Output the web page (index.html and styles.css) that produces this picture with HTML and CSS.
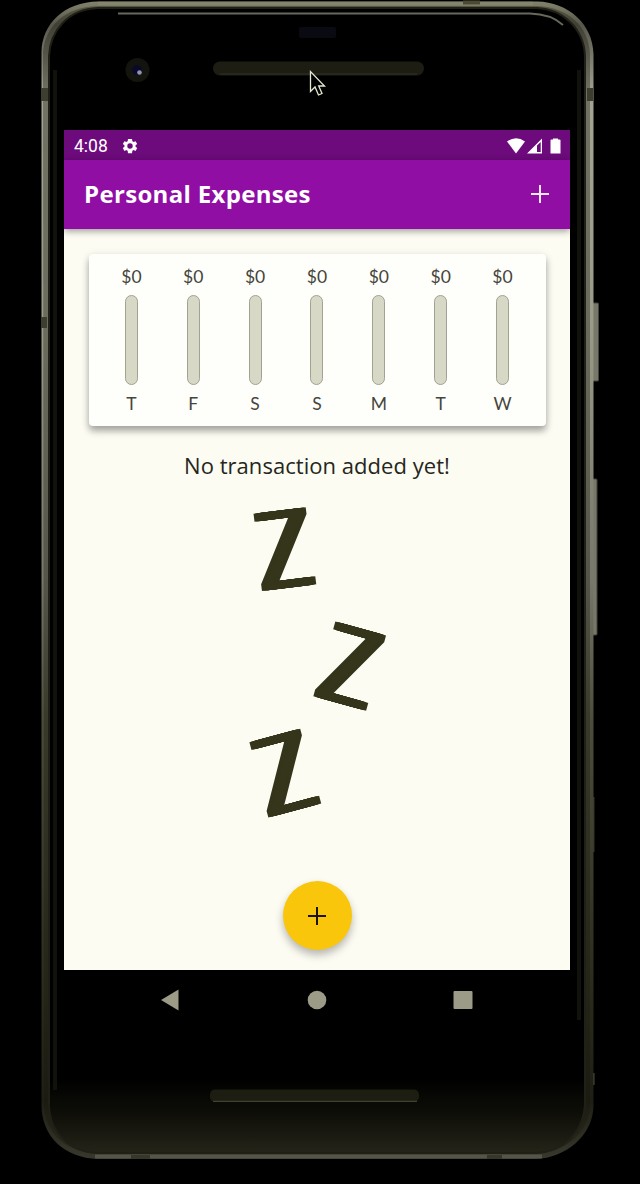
FILE: index.html
```html
<!DOCTYPE html>
<html lang="en">
<head>
<meta charset="utf-8">
<title>Personal Expenses</title>
<link rel="stylesheet" href="styles.css">
</head>
<body>
<div class="stage">
  <svg class="shell" width="640" height="1184" viewBox="0 0 640 1184">
    <defs>
      <linearGradient id="rail" x1="0" y1="0" x2="0" y2="1">
        <stop offset="0" stop-color="#83836c"/><stop offset=".02" stop-color="#56564a"/>
        <stop offset=".08" stop-color="#a4a493"/><stop offset=".28" stop-color="#9a9a88"/>
        <stop offset=".5" stop-color="#77776a"/><stop offset=".62" stop-color="#4d4d3b"/>
        <stop offset=".85" stop-color="#2c2c1d"/><stop offset=".95" stop-color="#1e1e14"/><stop offset="1" stop-color="#38382c"/>
      </linearGradient>
      <linearGradient id="chin" x1="0" y1="0" x2="0" y2="1">
        <stop offset="0" stop-color="#000"/><stop offset=".935" stop-color="#000"/><stop offset=".965" stop-color="#0e0e08"/><stop offset="1" stop-color="#242419"/>
      </linearGradient>
    </defs>
    <g fill="#77776a" stroke="#44443a">
      <rect x="590.500" y="303" width="8" height="78" rx="1"/>
      <rect x="590.500" y="479" width="6.500" height="156" rx="1"/>
    </g>
    <rect x="591" y="797" width="3.500" height="55" fill="#34342a"/>
    <rect x="591" y="1073" width="3.500" height="12" fill="#4d4d42"/>
    <path d="M41.500 52C42 24 64 2 98 1.500H537C568 2 593 24 593.500 54V1106C593 1136 565 1158 536 1159H98C64 1158 41 1136 41.500 1104Z" fill="url(#rail)"/>
    <path d="M43 52C45 27 64 7 98 6H537C568 7 589 27 590 54V1106C588 1134 565 1152 536 1154H98C66 1152 45 1134 44 1104Z" fill="#17170f" fill-opacity=".35"/>
    <path d="M49 56C50 31 68 9 98 8H537C563 9 584 29 585 56V1104C583 1134 562 1152 536 1153H98C69 1152 49 1132 49 1104Z" fill="url(#chin)" stroke="#202017" stroke-width="2"/>
    <path d="M55 70V1090M579 70V1020" stroke="#12120c" stroke-width="4"/>
    <path d="M118 13.500H530Q551 14 563 25" fill="none" stroke="#68685c" stroke-width="1.800"/>
    <path d="M98 3.500H533" stroke="#85856d" stroke-width="3.500"/>
    <path d="M463 2.500H480" stroke="#4a4a32" stroke-width="4"/>
    <path d="M95 1156.500H542" stroke="#55554a" stroke-width="4"/>
    <path d="M131 1157H150M487 1157H502" stroke="#38382a" stroke-width="4"/>
    <path d="M41 88H48V101H41ZM587 88H593V101H587ZM41 317H47V328H41Z" fill="#3e3e30"/>
    <rect x="299" y="27" width="37" height="11" rx="2" fill="#0a0a12"/>
    <circle cx="137.500" cy="70" r="12" fill="#14140f"/>
    <circle cx="137" cy="70" r="5" fill="#0a0a28"/>
    <circle cx="139.500" cy="72.500" r="2.300" fill="#9393b4"/>
    <rect x="213" y="61.500" width="211" height="14" rx="7" fill="#1d1d14"/>
    <path d="M220 74H417" stroke="#2b2b20" stroke-width="1.500"/>
    <rect x="210" y="1089.500" width="209" height="12.500" rx="5" fill="#1d1d12"/>
    <path d="M213 1101.300H417" stroke="#424232" stroke-width="1.200"/>
    <path d="M310.500 71.500V91.500L315 87L318.500 95L322 93.500L318.700 86H324.500Z" fill="#000" stroke="#e8e8d2" stroke-width="1.300"/>
  </svg>

  <main class="screen">
    <div class="status">
      <span class="time">4:08</span>
      <svg class="gear" width="18" height="18" viewBox="0 0 24 24"><path fill="#fff" fill-rule="evenodd" d="M19.400 13a7.500 7.500 0 0 0 0-2l2.200-1.700-2.200-3.800-2.600 1.100a7.500 7.500 0 0 0-1.700-1L14.700 2.500H9.300l-.4 3.100a7.500 7.500 0 0 0-1.700 1L4.600 5.500 2.400 9.300 4.600 11a7.500 7.500 0 0 0 0 2l-2.200 1.700 2.200 3.800 2.600-1.100a7.500 7.500 0 0 0 1.700 1l.4 3.100h5.400l.4-3.100a7.500 7.500 0 0 0 1.700-1l2.600 1.100 2.200-3.800ZM12 15.600a3.600 3.600 0 1 1 0-7.200 3.600 3.600 0 0 1 0 7.200Z"/></svg>
      <svg class="signals" width="54" height="16" viewBox="0 0 54 16">
        <g fill="#fff"><path d="M0 3.500Q9-3.200 18 3.500L9 15.500Z"/><path fill-rule="evenodd" d="M20 15.500L35 .5V15.500ZM30 7.500V14H33.700V4Z"/><path d="M43.500 2Q43.500 1.500 44.500 1.500H46V.5H51V1.500H52.500Q53.500 1.500 53.500 2V15.500H43.500Z"/></g>
      </svg>
    </div>
    <header class="appbar">
      <h1 class="title">Personal Expenses</h1>
      <svg width="18" height="18" viewBox="0 0 18 18"><path d="M9 0V18M0 9H18" stroke="#fbe9fb" stroke-width="2"/></svg>
    </header>
    <section class="body">
      <div class="chart">
        <div class="day"><span>$0</span><i class="bar"></i><span>T</span></div>
        <div class="day"><span>$0</span><i class="bar"></i><span>F</span></div>
        <div class="day"><span>$0</span><i class="bar"></i><span>S</span></div>
        <div class="day"><span>$0</span><i class="bar"></i><span>S</span></div>
        <div class="day"><span>$0</span><i class="bar"></i><span>M</span></div>
        <div class="day"><span>$0</span><i class="bar"></i><span>T</span></div>
        <div class="day"><span>$0</span><i class="bar"></i><span>W</span></div>
      </div>
      <p class="empty">No transaction added yet!</p>
      <div class="sleep">
        <span class="z z-one">Z</span>
        <span class="z z-two">Z</span>
        <span class="z z-three">Z</span>
      </div>
      <button class="fab" aria-label="Add"><svg width="18" height="18" viewBox="0 0 18 18"><path d="M9 0V18M0 9H18" stroke="#1a1405" stroke-width="2"/></svg></button>
    </section>
    <nav class="nav">
      <svg width="18" height="22" viewBox="0 0 18 22"><path d="M0 11L17.500 .5V21.500Z" fill="#9b9b87"/></svg>
      <svg class="home" width="20" height="20" viewBox="0 0 20 20"><circle cx="10" cy="10" r="9.300" fill="#9b9b87"/></svg>
      <svg width="20" height="20" viewBox="0 0 20 20"><rect x=".5" y="1" width="19" height="18" rx="1" fill="#9b9b87"/></svg>
    </nav>
  </main>
</div>
</body>
</html>
```
FILE: styles.css
```css
* { box-sizing: border-box; }
body { margin: 0; background: #000; }
.stage {
  position: relative;
  width: 640px;
  height: 1184px;
  padding: 130px 70px 0 64px;
  overflow: hidden;
}
.shell { position: absolute; left: 0; top: 0; }
.screen { position: relative; width: 506px; font-family: "Open Sans", sans-serif; }
.status {
  display: flex;
  align-items: center;
  height: 30px;
  padding: 1px 9px 0 10px;
  background: #6d0a7c;
  color: #fff;
}
.time { font: 17.5px/20px Roboto, sans-serif; }
.gear { margin-left: 13px; }
.signals { margin-left: auto; }
.appbar {
  position: relative;
  display: flex;
  align-items: center;
  justify-content: space-between;
  height: 69px;
  padding: 0 21px 1px 20px;
  background: #900ea4;
  box-shadow: 0 2px 7px rgba(0, 0, 0, .4);
}
.title { margin: 0; color: #fff; font-size: 24px; line-height: 32px; font-weight: 700; letter-spacing: .33px; }
.body {
  display: flex;
  flex-direction: column;
  align-items: center;
  height: 741px;
  padding-top: 25px;
  background: #fcfcf3;
}
.chart {
  display: flex;
  justify-content: space-around;
  width: 457px;
  height: 172px;
  padding: 12px 12px 0;
  border-radius: 4px;
  background: #fefefb;
  box-shadow: 0 5px 7px rgba(0, 0, 0, .32), 0 1px 10px rgba(0, 0, 0, .08);
}
.day {
  display: flex;
  flex-direction: column;
  align-items: center;
  width: 60px;
  color: #45453c;
  font: 17.5px/22px Lato, sans-serif;
}
.bar {
  width: 13px;
  height: 90px;
  margin: 7px 0 8px;
  border: 1px solid #a2a291;
  border-radius: 7px;
  background: #d8d8c7;
}
.empty { margin: 24px 0 0; color: #262620; font-size: 22px; line-height: 30px; letter-spacing: .04px; }
.sleep { position: relative; width: 160px; height: 340px; margin-top: 15px; }
.z {
  position: absolute;
  width: 80px;
  height: 80px;
  text-align: center;
  font-size: 109px;
  line-height: 80px;
  color: #35351b;
  text-shadow: 1.700px 0, -1.700px 0, 3.400px 0, -3.400px 0, 5.500px 0, -5.500px 0;
}
.z-one { left: 6.500px; top: 10.500px; transform: rotate(-7.100deg) scaleX(.84); }
.z-two { left: 74px; top: 128px; transform: rotate(15.500deg) scaleX(.84); }
.z-three { left: 6.500px; top: 235px; transform: rotate(-15deg) scaleX(.84); }
.fab {
  display: grid;
  place-items: center;
  width: 69px;
  height: 69px;
  margin: 46px 0 0;
  padding: 0;
  border: 0;
  border-radius: 50%;
  background: #f9c60c;
  box-shadow: 0 5px 9px rgba(0, 0, 0, .28);
}
.nav {
  display: flex;
  align-items: center;
  justify-content: space-between;
  height: 59px;
  padding: 0 97px;
  background: #000;
}
.home { margin-left: 2px; }
```
